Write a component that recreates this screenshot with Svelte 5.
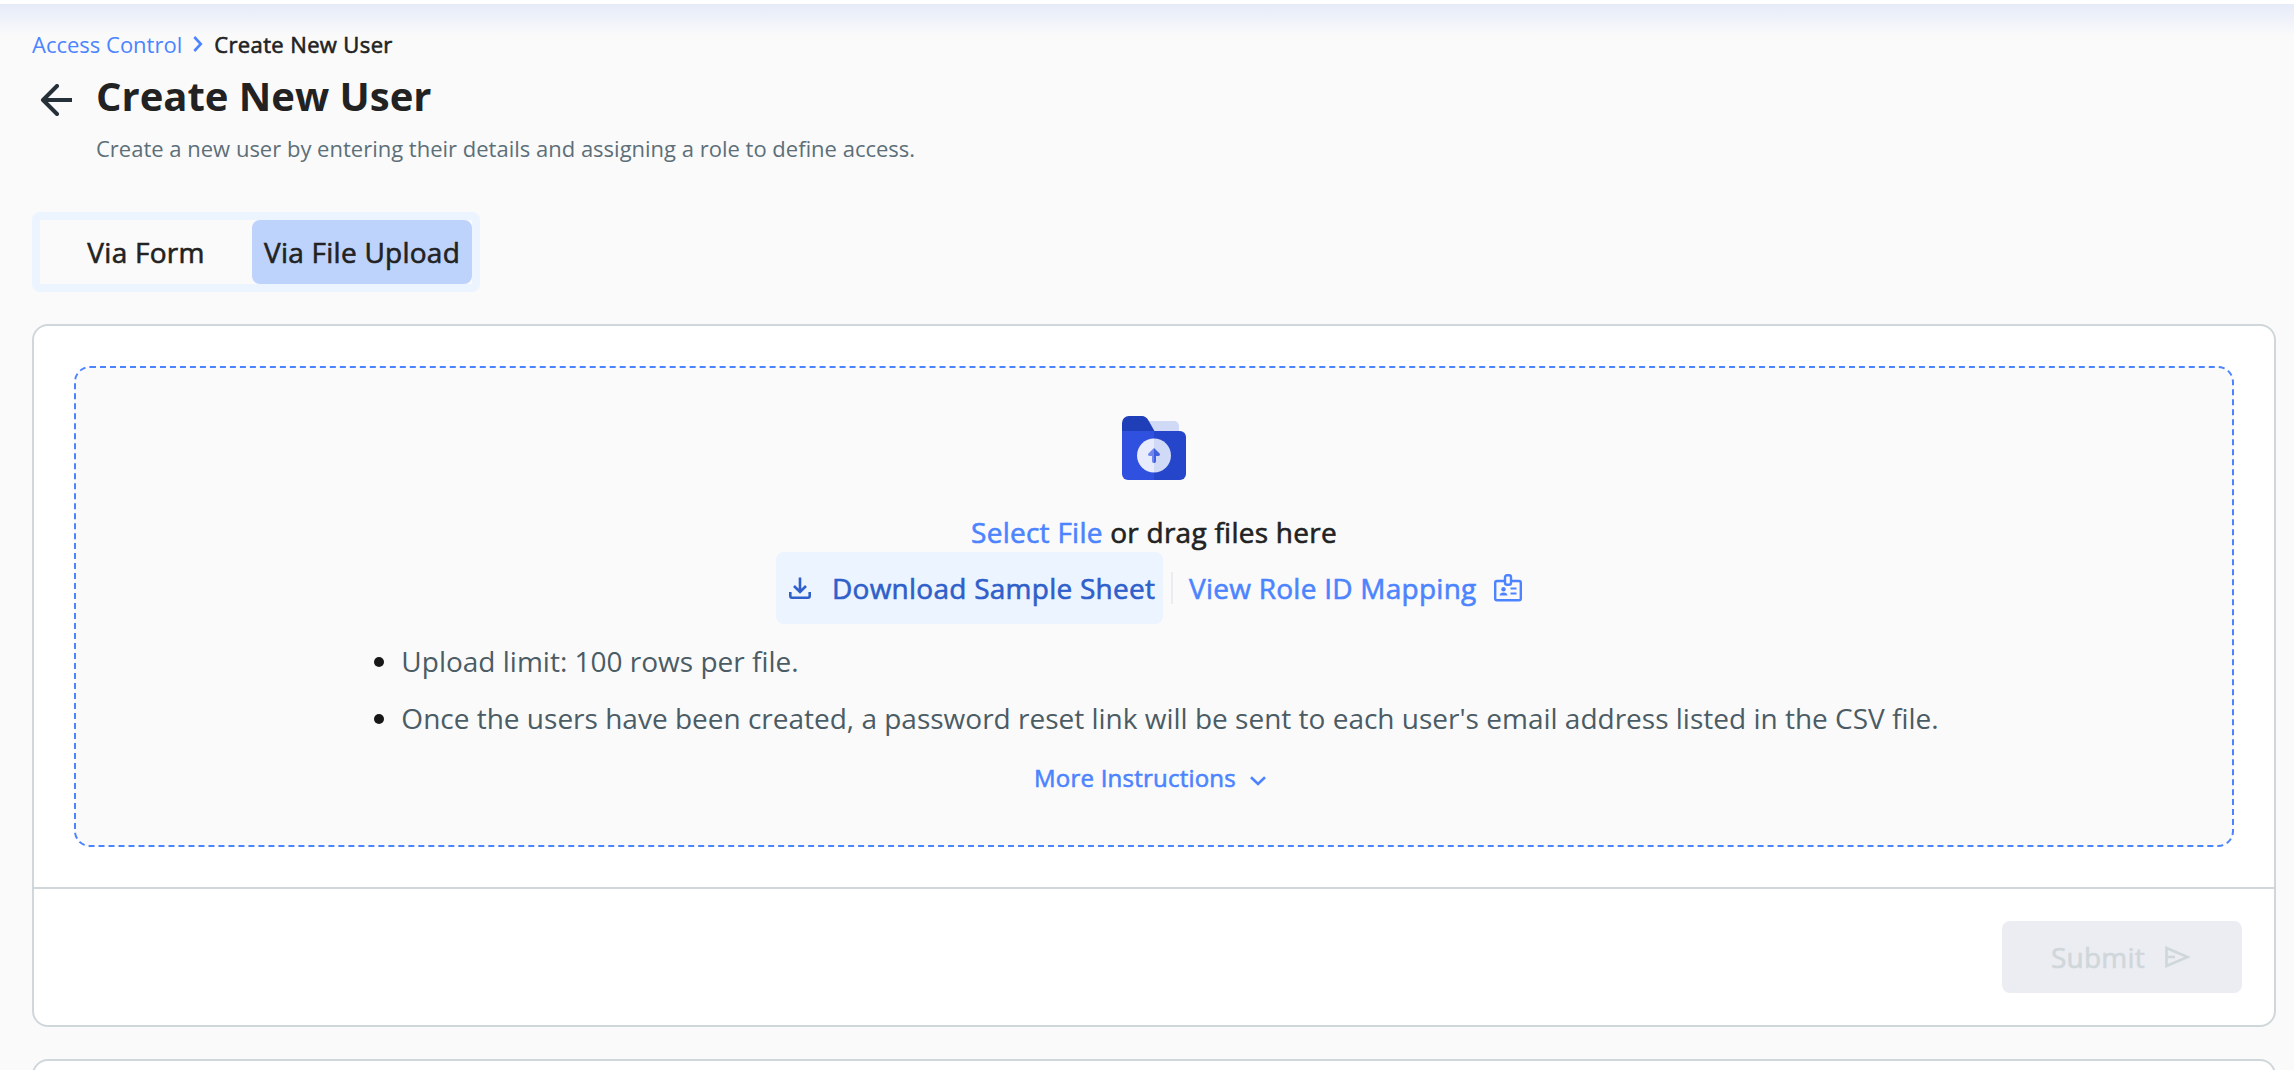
<script lang="ts">
  type Tab = 'form' | 'upload';

  const tabs: { id: Tab; label: string }[] = [
    { id: 'form', label: 'Via Form' },
    { id: 'upload', label: 'Via File Upload' },
  ];

  const notes = [
    'Upload limit: 100 rows per file.',
    "Once the users have been created, a password reset link will be sent to each user's email address listed in the CSV file.",
  ];

  let active = $state<Tab>('upload');
</script>

<div class="page">
  <nav class="crumbs">
    <a class="crumb-link" href="#access">Access Control</a>
    <svg class="crumb-sep" viewBox="0 0 12 18" fill="none" stroke="currentColor" stroke-width="2.6">
      <path d="M2.3 2 L8.8 9 L2.3 16" />
    </svg>
    <span class="crumb-here medium">Create New User</span>
  </nav>

  <header class="head">
    <button class="back" aria-label="Back">
      <svg viewBox="0 0 32 32" fill="none" stroke="currentColor" stroke-width="4">
        <path d="M32 16H3" />
        <path d="M17 2 L3 16 L17 30" stroke-linecap="round" stroke-linejoin="round" />
      </svg>
    </button>
    <div>
      <h1 class="title">Create New User</h1>
      <p class="subtitle">Create a new user by entering their details and assigning a role to define access.</p>
    </div>
  </header>

  <div class="tabs">
    {#each tabs as tab (tab.id)}
      <button class="tab medium" class:active={active === tab.id} onclick={() => (active = tab.id)}>{tab.label}</button>
    {/each}
  </div>

  <section class="card">
    <div class="card-body">
      <div class="drop">
        <svg class="folder" viewBox="0 0 64 64">
          <path d="M20 5H52A5 5 0 0 1 57 10V20H20Z" fill="#d0d9f6" />
          <path d="M0 18V7A7 7 0 0 1 7 0H20Q24 0 26.5 4.5L33 16V18Z" fill="#1f3fb9" />
          <path d="M0 15H32V64H6A6 6 0 0 1 0 58Z" fill="#3050e0" />
          <path d="M32 15H58A6 6 0 0 1 64 21V58A6 6 0 0 1 58 64H32Z" fill="#2546cb" />
          <path d="M32 22.5A17 17 0 0 0 32 56.5Z" fill="#e7ebfb" />
          <path d="M32 22.5A17 17 0 0 1 32 56.5Z" fill="#d0d9f6" />
          <path d="M32 32L26.2 37.8Q25.5 40 28 40H30V45.5Q30.3 47 32 47Z" fill="#6f87ec" />
          <path d="M32 32L37.8 37.8Q38.5 40 36 40H34V45.5Q33.7 47 32 47Z" fill="#3f60dd" />
        </svg>

        <p class="prompt medium"><span class="pick">Select File</span> or drag files here</p>

        <div class="actions medium">
          <button class="download">
            <svg viewBox="0 0 24 24" fill="none" stroke="currentColor" stroke-width="2.6">
              <path d="M12 1.5V16M6 10L12 16L18 10" />
              <path d="M2.3 16V20Q2.3 21.7 4 21.7H20Q21.7 21.7 21.7 20V16" />
            </svg>
            Download Sample Sheet
          </button>
          <span class="split"></span>
          <button class="mapping">
            View Role ID Mapping
            <svg viewBox="0 0 28 28" fill="none" stroke="currentColor" stroke-width="2.4">
              <path d="M10.5 7H3Q1.2 7 1.2 9V24.5Q1.2 26.3 3 26.3H25Q26.8 26.3 26.8 24.5V9Q26.8 7 25 7H17.5" />
              <rect x="11" y="1.3" width="6" height="9.5" rx="2" />
              <circle cx="9.5" cy="15.3" r="2.2" fill="currentColor" stroke="none" />
              <path d="M5.5 21.5Q6 18.5 9.5 18.5T13.5 21.5Z" fill="currentColor" stroke="none" />
              <path d="M16.500 14.500H22.500M16.500 19.500H22.500" stroke-width="2" />
            </svg>
          </button>
        </div>

        <ul class="notes">
          {#each notes as note}
            <li>{note}</li>
          {/each}
        </ul>

        <button class="more medium">
          More Instructions
          <svg viewBox="0 0 16 10" fill="none" stroke="currentColor" stroke-width="2.6">
            <path d="M1 1.3L8 8L15 1.3" />
          </svg>
        </button>
      </div>
    </div>

    <footer class="card-foot">
      <button class="submit medium" disabled>
        Submit
        <svg viewBox="0 0 26 22" fill="none" stroke="currentColor" stroke-width="2.6">
          <path d="M1.5 2L22.5 11L1.5 20Z" />
          <path d="M1.5 11H10" />
        </svg>
      </button>
    </footer>
  </section>

  <section class="card next"></section>
</div>

<style>
  :global(body) {
    background: #fafafa;
    overflow: hidden;
  }
  .page {
    box-sizing: border-box;
    height: 1070px;
    padding: 24px 18px 0 32px;
    border-top: 4px solid #fff;
    overflow: hidden;
    background: linear-gradient(#e6ebf9, #fafafa 32px);
    font-family: 'Open Sans', 'Noto Sans', sans-serif;
    color: #222;
  }
  button {
    margin: 0;
    padding: 0;
    border: 0;
    background: none;
    color: inherit;
    font: inherit;
    letter-spacing: inherit;
    white-space: nowrap;
  }
  svg { display: block; flex: none; }

  /* Open Sans has no static 500 cut, so thicken the regular one */
  .medium {
    letter-spacing: 0.009em;
    -webkit-text-stroke: 0.6px currentColor;
  }

  .crumbs {
    display: flex;
    align-items: center;
    height: 32px;
    font-size: 22px;
    line-height: 32px;
  }
  .crumb-link { color: #4c84ff; text-decoration: none; }
  .crumb-sep { width: 12px; height: 18px; margin: 0 10px; color: #4c84ff; }
  .crumb-here { letter-spacing: 0.017em; }

  .head { display: flex; gap: 24px; margin-top: 8px; }
  .back { align-self: flex-start; padding: 16px 0 0 8px; color: #263038; }
  .back svg { width: 32px; height: 32px; }
  .title { margin: 0; font-size: 40px; line-height: 56px; font-weight: 700; }
  .subtitle { margin: 8px 0 0; font-size: 22px; line-height: 32px; color: #5c6f79; }

  .tabs {
    display: flex;
    width: 432px;
    margin-top: 48px;
    border: 8px solid #ebf4ff;
    border-radius: 8px;
  }
  .tab {
    flex: 1;
    height: 64px;
    border-radius: 8px;
    font-size: 28px;
    letter-spacing: 0.009em;
  }
  .tab.active { flex: 0 0 220px; background: #bed3fb; }

  .card {
    margin-top: 32px;
    border: 2px solid #d0d7da;
    border-radius: 16px;
    background: #fff;
  }
  .card.next { height: 200px; }
  .card-body { padding: 40px; }
  .drop {
    box-sizing: border-box;
    display: flex;
    flex-direction: column;
    align-items: center;
    height: 481px;
    padding-top: 48px;
    border: 2px dashed #4c84ff;
    border-radius: 16px;
    background: #fafafa;
  }
  .folder { width: 64px; height: 64px; }
  .prompt { margin: 32px 0 0; font-size: 28px; line-height: 40px; }
  .pick { color: #4c84ff; }

  .actions {
    display: flex;
    align-items: center;
    height: 72px;
    font-size: 28px;
  }
  .download {
    box-sizing: border-box;
    display: flex;
    align-items: center;
    gap: 20px;
    width: 387px;
    height: 72px;
    padding-left: 12px;
    border-radius: 8px;
    background: #ebf4ff;
    color: #2f5fca;
  }
  .download svg { width: 24px; height: 24px; }
  .split { width: 2px; height: 32px; margin: 0 16px 0 8px; background: #ebecf2; }
  .mapping {
    display: flex;
    align-items: center;
    justify-content: space-between;
    width: 333px;
    margin-right: 10px;
    color: #4c84ff;
  }
  .mapping svg { width: 28px; height: 28px; }

  .notes {
    margin: 17px 0 0;
    padding: 0;
    list-style: none;
    font-size: 28px;
    line-height: 40px;
    color: #4b5c65;
  }
  .notes li { display: flex; align-items: center; }
  .notes li + li { margin-top: 17px; }
  .notes li::before {
    content: '';
    width: 10px;
    height: 10px;
    margin: 2px 17px 0 5px;
    border-radius: 50%;
    background: #171717;
  }

  .more {
    display: flex;
    align-items: center;
    gap: 14px;
    margin-top: 24px;
    font-size: 24px;
    line-height: 32px;
    letter-spacing: 0.009em;
    color: #4c84ff;
  }
  .more svg { width: 16px; height: 10px; margin: 5px 8px 0 0; }

  .card-foot {
    display: flex;
    justify-content: flex-end;
    padding: 32px;
    border-top: 2px solid #d0d7da;
  }
  .submit {
    display: flex;
    align-items: center;
    justify-content: center;
    gap: 20px;
    width: 240px;
    height: 72px;
    border-radius: 8px;
    background: #ebedf2;
    color: #d0d7da;
    font-size: 28px;
    letter-spacing: 0.009em;
  }
  .submit svg { width: 26px; height: 22px; margin-right: 2px; }
</style>
